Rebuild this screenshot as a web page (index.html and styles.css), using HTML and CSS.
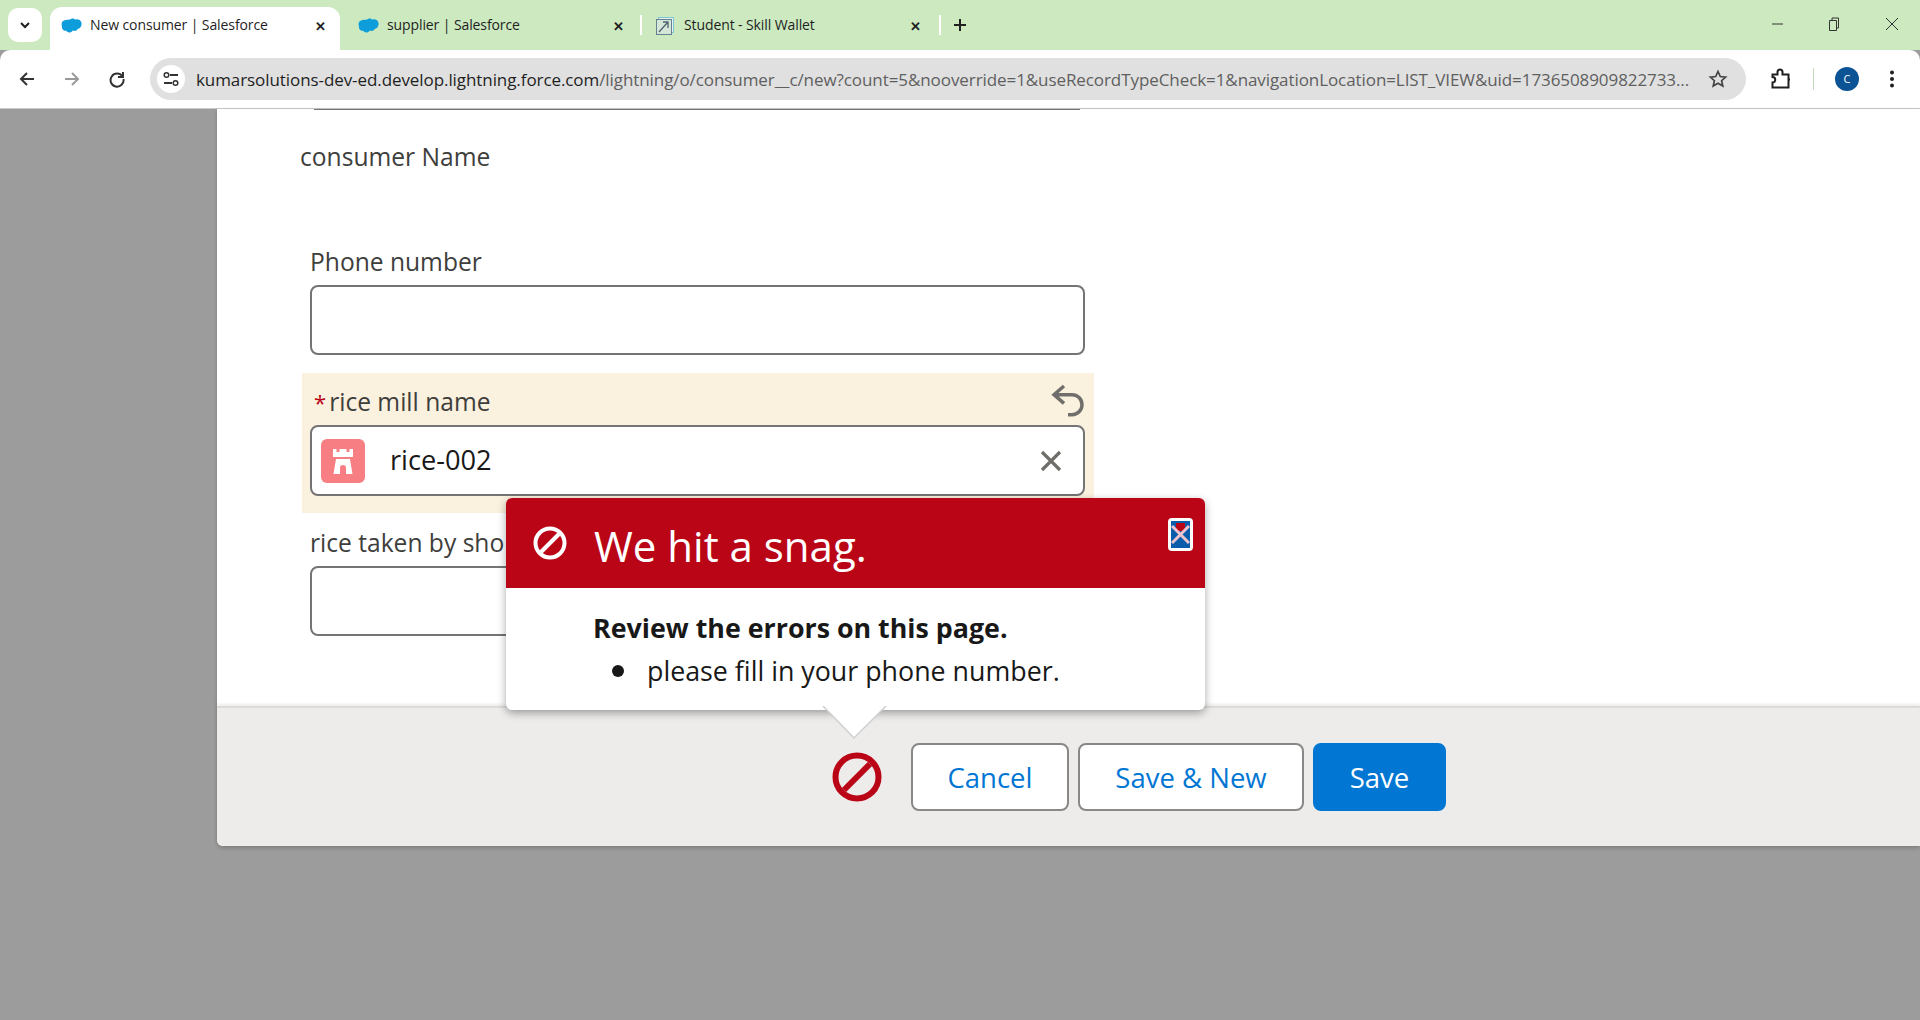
FILE: index.html
```html
<!DOCTYPE html>
<html lang="en">
<head>
    <meta charset="UTF-8">
    <title>New consumer | Salesforce</title>
    <link rel="stylesheet" href="styles.css">
</head>
<body>

    <div class="tabstrip">
        <button class="tab-search">
            <svg width="14" height="14" viewBox="0 0 14 14"><path d="M3 5l4 4 4-4" fill="none" stroke="#1f1f1f" stroke-width="2"/></svg>
        </button>
        <div class="tab tab-active">
            <svg class="favicon" width="22" height="16" viewBox="0 0 22 16"><path d="M9 1.500c1.500-1.500 4-1.500 5.200.2 2.400-1 5.300.2 6.100 2.600.9 2.600-.4 5.900-3.500 6.600-.9 1.900-3.500 2.500-5.100 1.500-1.300 2.400-5 3-6.400.4-2.700.4-4.800-2-4.300-4.500C.2 6.500.5 3.500 3 2.500c2-.9 4.500-.5 6-1z" fill="#0d9dda"/></svg>
            <span class="tab-title">New consumer | Salesforce</span>
            <span class="tab-close">✕</span>
        </div>
        <div class="tab tab-second">
            <svg class="favicon" width="22" height="16" viewBox="0 0 22 16"><path d="M9 1.500c1.500-1.500 4-1.500 5.200.2 2.400-1 5.300.2 6.100 2.600.9 2.600-.4 5.900-3.500 6.600-.9 1.900-3.500 2.500-5.100 1.500-1.300 2.400-5 3-6.400.4-2.700.4-4.800-2-4.300-4.500C.2 6.500.5 3.500 3 2.500c2-.9 4.500-.5 6-1z" fill="#0d9dda"/></svg>
            <span class="tab-title">supplier | Salesforce</span>
            <span class="tab-close">✕</span>
        </div>
        <div class="tab-sep"></div>
        <div class="tab tab-third">
            <svg class="favicon" width="20" height="20" viewBox="0 0 20 20"><rect x="3.500" y="1.500" width="15" height="15" fill="#e6f4ee" stroke="#7fc4d6"/><rect x="1.500" y="3.500" width="15" height="15" fill="#d5e7d8" stroke="#66808f"/><path d="M4 16L13 6M8 6h5v6" fill="none" stroke="#4d6472" stroke-width="1.300"/></svg>
            <span class="tab-title">Student - Skill Wallet</span>
            <span class="tab-close">✕</span>
        </div>
        <div class="tab-sep"></div>
        <svg class="tab-new" width="14" height="14" viewBox="0 0 14 14"><path d="M7 1v12M1 7h12" stroke="#1f1f1f" stroke-width="2"/></svg>
        <div class="win-controls">
            <svg width="14" height="14" viewBox="0 0 14 14"><path d="M1 7h11" stroke="#333" stroke-width="1"/></svg>
            <svg width="14" height="14" viewBox="0 0 14 14"><path d="M2.500 3.500h7v10h-7zM5 3.500V1h6.500v10h-2" fill="none" stroke="#333" stroke-width="1"/></svg>
            <svg class="win-close" width="14" height="14" viewBox="0 0 14 14"><path d="M1 1l12 12M13 1L1 13" stroke="#333" stroke-width="1"/></svg>
        </div>
    </div>

    <div class="toolbar">
        <svg class="nav-icon" width="18" height="18" viewBox="0 0 18 18"><path d="M16 9H3M9 3L3 9l6 6" fill="none" stroke="#333" stroke-width="2"/></svg>
        <svg class="nav-icon" width="18" height="18" viewBox="0 0 18 18"><path d="M2 9h13M9 3l6 6-6 6" fill="none" stroke="#9a9a9a" stroke-width="2"/></svg>
        <svg class="nav-icon" width="18" height="18" viewBox="0 0 18 18"><path d="M14.500 6.500A6.500 6.500 0 1 0 15.500 9M15 2v5h-5" fill="none" stroke="#333" stroke-width="2"/></svg>
        <div class="omnibox">
            <span class="site-info">
                <svg width="18" height="18" viewBox="0 0 18 18"><path d="M8 5h8M2 13h8" stroke="#333" stroke-width="1.800"/><circle cx="4.500" cy="5" r="2.300" fill="none" stroke="#333" stroke-width="1.500"/><circle cx="13.500" cy="13" r="2.300" fill="none" stroke="#333" stroke-width="1.500"/></svg>
            </span>
            <span class="url"><span class="url-host">kumarsolutions-dev-ed.develop.lightning.force.com</span>/lightning/o/consumer__c/new?count=5&amp;nooverride=1&amp;useRecordTypeCheck=1&amp;navigationLocation=LIST_VIEW&amp;uid=1736508909822733...</span>
            <svg class="star" width="20" height="20" viewBox="0 0 20 20"><path d="M10 2.500l2.300 5 5.300.6-4 3.600 1.200 5.300L10 14.300 5.200 17l1.200-5.300-4-3.600 5.300-.6z" fill="none" stroke="#444" stroke-width="1.700"/></svg>
        </div>
        <svg class="ext-icon" width="22" height="22" viewBox="0 0 22 22"><path d="M2.500 6.500h5V4a2.500 2.500 0 0 1 5 0v2.500h6v5H20v0h-1.500v8h-16v-5a2.600 2.600 0 0 0 0-5.500z" fill="none" stroke="#1f1f1f" stroke-width="2"/></svg>
        <div class="toolbar-sep"></div>
        <div class="avatar">C</div>
        <svg class="kebab" width="6" height="18" viewBox="0 0 6 18"><circle cx="3" cy="2.500" r="2"/><circle cx="3" cy="9" r="2"/><circle cx="3" cy="15.500" r="2"/></svg>
    </div>

    <div class="backdrop">
        <div class="modal">
            <div class="modal-body">
                <div class="cut-input"></div>
                <div class="section-label">consumer Name</div>

                <div class="field field-phone">
                    <label class="field-label">Phone number</label>
                    <div class="input"></div>
                </div>

                <div class="field field-changed">
                    <div class="label-row">
                        <label class="field-label"><span class="req">*</span>rice mill name</label>
                        <svg class="undo" width="40" height="40" viewBox="0 0 30 30"><path d="M12 3L4.500 9.500 12 16M5 9.500h13a7.500 7.500 0 0 1 0 15h-3" fill="none" stroke="#706e6b" stroke-width="2.600"/></svg>
                    </div>
                    <div class="input input-lookup">
                        <span class="lookup-icon">
                            <svg width="26" height="30" viewBox="0 0 26 30"><path d="M3 3h3.500v3h3V3h7v3h3V3H23v8H3zM6 13h14l2.500 15h-6.500v-6a3 3 0 0 0-6 0v6H3.500z" fill="#fff"/></svg>
                        </span>
                        <span class="lookup-value">rice-002</span>
                        <svg class="lookup-clear" width="24" height="24" viewBox="0 0 24 24"><path d="M3 3l18 18M21 3L3 21" stroke="#706e6b" stroke-width="3.200"/></svg>
                    </div>
                </div>

                <div class="field field-rice">
                    <label class="field-label">rice taken by sho</label>
                    <div class="input"></div>
                </div>
            </div>

            <div class="modal-footer">
                <svg class="footer-error" width="50" height="50" viewBox="0 0 50 50"><circle cx="25" cy="25" r="21.500" fill="none" stroke="#ba0517" stroke-width="6"/><path d="M12 38L38 12" stroke="#ba0517" stroke-width="6"/></svg>
                <button class="btn btn-cancel">Cancel</button>
                <button class="btn btn-new">Save &amp; New</button>
                <button class="btn btn-brand">Save</button>
            </div>

            <div class="popover">
                <div class="popover-head">
                    <svg width="34" height="34" viewBox="0 0 34 34"><circle cx="17" cy="17" r="14.500" fill="none" stroke="#fff" stroke-width="4"/><path d="M8 26L26 8" stroke="#fff" stroke-width="4"/></svg>
                    <h2 class="popover-title">We hit a snag.</h2>
                    <span class="popover-close">
                        <svg width="19" height="27" viewBox="0 0 19 27"><rect width="19" height="27" fill="#0b5cab"/><rect x="5" y="2" width="9" height="8" fill="#ba0517"/><path d="M1 5l17 17M18 5L1 22" stroke="#f0c4cc" stroke-width="3"/></svg>
                    </span>
                </div>
                <div class="popover-body">
                    <div class="popover-heading">Review the errors on this page.</div>
                    <ul class="popover-list">
                        <li>please fill in your phone number.</li>
                    </ul>
                </div>
                <svg class="popover-nub" width="66" height="34" viewBox="0 0 66 34"><path d="M1 0L32 32 64 0z" fill="#fff"/><path d="M1 0L32 32 64 0" fill="none" stroke="#cfcfcf" stroke-width="1.500"/></svg>
            </div>
        </div>
    </div>

</body>
</html>
```

FILE: styles.css
```css
html, body {
    margin: 0;
    height: 100%;
}
body {
    font-family: "Open Sans", "Noto Sans", sans-serif;
    display: flex;
    flex-direction: column;
    height: 1020px;
    overflow: hidden;
    background: #9c9c9c;
    color: #3e3e3c;
}
.tabstrip {
    height: 50px;
    flex: none;
    display: flex;
    align-items: flex-end;
    background: #cce9bf;
    position: relative;
    padding-left: 8px;
}
.tab-search {
    width: 34px;
    height: 34px;
    align-self: flex-start;
    margin-top: 8px;
    padding: 0;
    border: none;
    border-radius: 10px;
    background: #fff;
    display: flex;
    align-items: center;
    justify-content: center;
}
.tab {
    height: 43px;
    display: flex;
    align-items: center;
    padding: 0 14px 8px 18px;
    box-sizing: border-box;
    font-size: 14px;
    color: #1f1f1f;
}
.tab-active {
    width: 290px;
    margin-left: 8px;
    padding-left: 11px;
    padding-right: 14px;
    background: #fff;
    border-radius: 12px 12px 0 0;
    margin-right: 8px;
}
.tab-active .favicon {
    margin-right: 7px;
}
.tab-second {
    width: 292px;
    padding-left: 10px;
    padding-right: 16px;
}
.tab-second .favicon {
    margin-right: 7px;
}
.tab-third {
    width: 297px;
    padding-left: 13px;
    padding-right: 18px;
}
.favicon {
    flex: none;
    margin-right: 9px;
    margin-top: 3px;
}
.tab-title {
    flex: 1;
    white-space: nowrap;
    letter-spacing: -0.1px;
}
.tab-close {
    font-size: 13px;
    font-weight: 700;
    margin-top: 3px;
}
.tab-sep {
    width: 2px;
    height: 20px;
    background: #fff;
    align-self: flex-start;
    margin-top: 15px;
}
.tab-new {
    align-self: flex-start;
    margin: 18px 0 0 12px;
}
.win-controls {
    position: absolute;
    top: 17px;
    right: 21px;
    display: flex;
    gap: 42px;
}
.win-close {
    margin-left: 2px;
}
.toolbar {
    height: 59px;
    flex: none;
    box-sizing: border-box;
    background: #fff;
    border-bottom: 1px solid #c8c8c8;
    border-radius: 10px 10px 0 0;
    display: flex;
    align-items: center;
    padding: 0 17px 0 18px;
    position: relative;
}
.nav-icon {
    flex: none;
    margin-right: 27px;
}
.nav-icon:nth-child(3) {
    margin-right: 24px;
}
.omnibox {
    flex: none;
    width: 1596px;
    height: 42px;
    box-sizing: border-box;
    background: #e0e0e0;
    border-radius: 21px;
    display: flex;
    align-items: center;
    padding: 0 18px 0 7px;
}
.site-info {
    width: 28px;
    height: 28px;
    border-radius: 50%;
    background: #fff;
    display: flex;
    align-items: center;
    justify-content: center;
    flex: none;
    margin-right: 11px;
}
.url {
    flex: 1;
    font-size: 17px;
    white-space: nowrap;
    color: #5f5f5f;
    overflow: hidden;
    letter-spacing: -0.08px;
}
.url-host {
    color: #1f1f1f;
}
.star {
    flex: none;
}
.ext-icon {
    flex: none;
    margin-left: 24px;
}
.toolbar-sep {
    width: 1px;
    height: 22px;
    background: #c4d9bb;
    margin-left: 21px;
}
.avatar {
    width: 24px;
    height: 24px;
    border-radius: 50%;
    background: #0b5394;
    color: #fff;
    font-size: 11px;
    text-align: center;
    line-height: 24px;
    margin-left: 21px;
}
.kebab {
    fill: #1f1f1f;
    margin-left: 30px;
}
.backdrop {
    flex: 1;
    padding-left: 217px;
    min-height: 0;
}
.modal {
    background: #fff;
    height: 737px;
    border-radius: 0 0 0 6px;
    position: relative;
    display: flex;
    flex-direction: column;
    box-shadow: 0 2px 4px rgba(0, 0, 0, 0.2);
}
.modal-body {
    flex: 1;
    padding-left: 85px;
}
.cut-input {
    width: 766px;
    margin-left: 12px;
    border-bottom: 1px solid #747474;
}
.section-label {
    font-size: 24.6px;
    line-height: 34px;
    margin-top: 30px;
    margin-left: -2px;
}
.field {
    width: 792px;
    box-sizing: border-box;
    padding: 0 9px 0 8px;
}
.field-phone {
    margin-top: 71px;
}
.field-label {
    display: block;
    font-size: 24.6px;
    line-height: 34px;
}
.input {
    height: 70px;
    box-sizing: border-box;
    margin-top: 6px;
    border: 2px solid #747474;
    border-radius: 8px;
    background: #fff;
}
.field-changed {
    margin-top: 18px;
    height: 140px;
    padding-top: 12px;
    background: #faf1df;
}
.label-row {
    display: flex;
    height: 34px;
    align-items: center;
    justify-content: space-between;
}
.undo {
    margin-right: -3px;
}
.req {
    color: #ba0517;
    margin: 0 3px 0 4px;
    font-size: 22px;
}
.input-lookup {
    margin-top: 6px;
    height: 71px;
    display: flex;
    align-items: center;
    padding: 0 20px 0 9px;
}
.lookup-icon {
    width: 44px;
    height: 44px;
    border-radius: 6px;
    background: #f77e82;
    display: flex;
    align-items: center;
    justify-content: center;
    flex: none;
}
.lookup-value {
    flex: 1;
    margin-left: 25px;
    font-size: 27.2px;
    color: #181818;
    margin-top: -2px;
}
.field-rice {
    margin-top: 13px;
}
.modal-footer {
    flex: none;
    height: 140px;
    box-sizing: border-box;
    background: #edeceb;
    border-top: 2px solid #dddbda;
    box-shadow: 0 -2px 3px rgba(0, 0, 0, 0.08);
    border-radius: 0 0 0 6px;
    display: flex;
    align-items: flex-start;
    padding: 35px 0 0 615px;
    gap: 9px;
}
.footer-error {
    flex: none;
    margin-right: 20px;
    margin-top: 9px;
}
.btn {
    height: 68px;
    box-sizing: border-box;
    padding: 0;
    border: 2px solid #8a8886;
    border-radius: 8px;
    background: #fff;
    color: #0176d3;
    font-family: inherit;
    font-size: 27.5px;
}
.btn-cancel {
    width: 158px;
}
.btn-new {
    width: 226px;
}
.btn-brand {
    width: 133px;
    background: #0176d3;
    border-color: #0176d3;
    color: #fff;
}
.popover {
    position: absolute;
    left: 289px;
    top: 389px;
    width: 699px;
    height: 212px;
    background: #fff;
    border-radius: 6px;
    box-shadow: 0 3px 8px rgba(0, 0, 0, 0.35);
}
.popover-head {
    height: 90px;
    background: #ba0517;
    border-radius: 6px 6px 0 0;
    display: flex;
    align-items: center;
    padding-left: 27px;
    color: #fff;
    position: relative;
}
.popover-title {
    margin: 5px 0 0 27px;
    font-size: 42px;
    font-weight: 400;
}
.popover-close {
    position: absolute;
    right: 12px;
    top: 20px;
    padding: 3px;
    background: #fff;
    border-radius: 4px;
    display: flex;
}
.popover-body {
    padding: 20px 0 0 87px;
    color: #181818;
}
.popover-heading {
    font-size: 26.8px;
    font-weight: 700;
    line-height: 40px;
}
.popover-list {
    margin: 3px 0 0;
    padding: 0 0 0 19px;
    list-style: none;
    font-size: 26.8px;
    line-height: 40px;
}
.popover-list li {
    display: flex;
    align-items: center;
}
.popover-list li::before {
    content: "";
    width: 12px;
    height: 12px;
    border-radius: 50%;
    background: #181818;
    margin-right: 23px;
    flex: none;
}
.popover-nub {
    position: absolute;
    left: 316px;
    top: 208px;
}
```
